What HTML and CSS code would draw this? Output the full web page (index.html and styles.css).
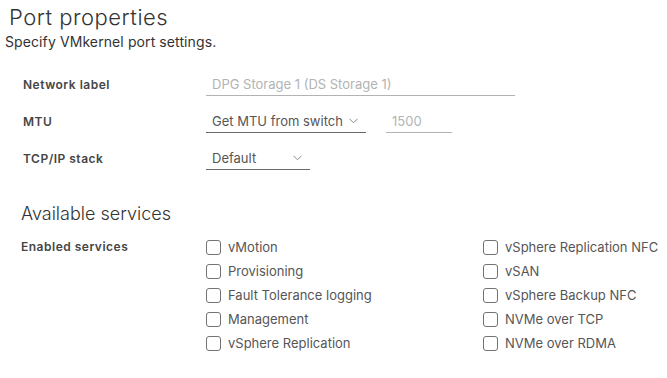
FILE: index.html
```html
<!DOCTYPE html>
<html lang="en">
<head>
    <meta charset="UTF-8">
    <meta name="viewport" content="width=device-width, initial-scale=1.0">
    <title>Port properties</title>
    <link rel="stylesheet" href="styles.css">
</head>
<body>

    <!-- Page header -->
    <div class="page-header">
        <h2 class="title">Port properties</h2>
        <p class="subtitle">Specify VMkernel port settings.</p>
    </div>

    <!-- Port settings form -->
    <div class="form">
        <div class="form-row">
            <label class="form-label">Network label</label>
            <div class="controls">
                <div class="text-input input-wide is-disabled">DPG Storage 1 (DS Storage 1)</div>
            </div>
        </div>
        <div class="form-row">
            <label class="form-label">MTU</label>
            <div class="controls">
                <div class="select select-mtu">
                    <span>Get MTU from switch</span>
                    <svg class="chevron" width="9" height="6" viewBox="0 0 9 6"><path d="M0.5 0.8 L4.5 4.8 L8.5 0.8" fill="none" stroke="#8c8c8c" stroke-width="1"/></svg>
                </div>
                <div class="text-input input-short is-disabled">1500</div>
            </div>
        </div>
        <div class="form-row">
            <label class="form-label">TCP/IP stack</label>
            <div class="controls">
                <div class="select select-stack">
                    <span>Default</span>
                    <svg class="chevron" width="9" height="6" viewBox="0 0 9 6"><path d="M0.5 0.8 L4.5 4.8 L8.5 0.8" fill="none" stroke="#8c8c8c" stroke-width="1"/></svg>
                </div>
            </div>
        </div>
    </div>

    <!-- Services section -->
    <h3 class="section-title">Available services</h3>
    <div class="services">
        <div class="form-label">Enabled services</div>
        <div class="service-grid">
            <label class="checkbox"><span class="box"></span>vMotion</label>
            <label class="checkbox"><span class="box"></span>vSphere Replication NFC</label>
            <label class="checkbox"><span class="box"></span>Provisioning</label>
            <label class="checkbox"><span class="box"></span>vSAN</label>
            <label class="checkbox"><span class="box"></span>Fault Tolerance logging</label>
            <label class="checkbox"><span class="box"></span>vSphere Backup NFC</label>
            <label class="checkbox"><span class="box"></span>Management</label>
            <label class="checkbox"><span class="box"></span>NVMe over TCP</label>
            <label class="checkbox"><span class="box"></span>vSphere Replication</label>
            <label class="checkbox"><span class="box"></span>NVMe over RDMA</label>
        </div>
    </div>

</body>
</html>
```

FILE: styles.css
```css
/* Base page */
body {
    font-family: Inter, "Noto Sans", sans-serif;
    font-size: 13px;
    color: #565656;
    background: #ffffff;
    margin: 0;
}

/* Header */
.page-header {
    padding: 4px 0 0 5px;
}
.title {
    font-size: 22px;
    font-weight: 300;
    letter-spacing: 0.5px;
    color: #333333;
    line-height: 26px;
    margin: 0 0 0 4px;
}
.subtitle {
    margin: 3px 0 0 0;
    font-size: 14px;
    letter-spacing: 0.1px;
    line-height: 18px;
    color: #333333;
}

/* Form rows */
.form {
    padding: 21px 0 0 23px;
    display: flex;
    flex-direction: column;
    gap: 13px;
}
.form-row {
    display: flex;
    align-items: center;
}
.form-label {
    width: 183px;
    font-size: 12px;
    font-weight: 600;
    letter-spacing: 0.5px;
    color: #454545;
}
.controls {
    display: flex;
    align-items: center;
    gap: 20px;
}

/* Inputs and selects */
.text-input,
.select {
    height: 24px;
    box-sizing: border-box;
    padding: 0 6px;
    display: flex;
    align-items: center;
    border-bottom: 1px solid #8c8c8c;
}
.text-input.is-disabled {
    color: #b3b3b3;
    border-bottom-color: #b3b3b3;
}
.input-wide {
    width: 309px;
}
.input-short {
    width: 66px;
}
.select {
    justify-content: space-between;
    color: #565656;
    border-bottom-color: #6a6a6a;
}
.select-mtu {
    width: 160px;
    padding-right: 8px;
}
.select-stack {
    width: 104px;
    padding-right: 8px;
}
.chevron {
    margin-top: 1px;
}

/* Services */
.section-title {
    margin: 32px 0 0 21px;
    font-size: 18px;
    font-weight: 300;
    color: #333333;
    line-height: 24px;
}
.services {
    display: flex;
    padding: 9px 0 0 21px;
}
.services .form-label {
    width: 185px;
    line-height: 24px;
}
.service-grid {
    display: grid;
    grid-template-columns: 277px auto;
    grid-auto-rows: 24px;
}
.checkbox {
    display: flex;
    align-items: center;
    gap: 7px;
    color: #565656;
}
.box {
    width: 15px;
    height: 15px;
    box-sizing: border-box;
    border: 1px solid #737373;
    border-radius: 3px;
}
```
